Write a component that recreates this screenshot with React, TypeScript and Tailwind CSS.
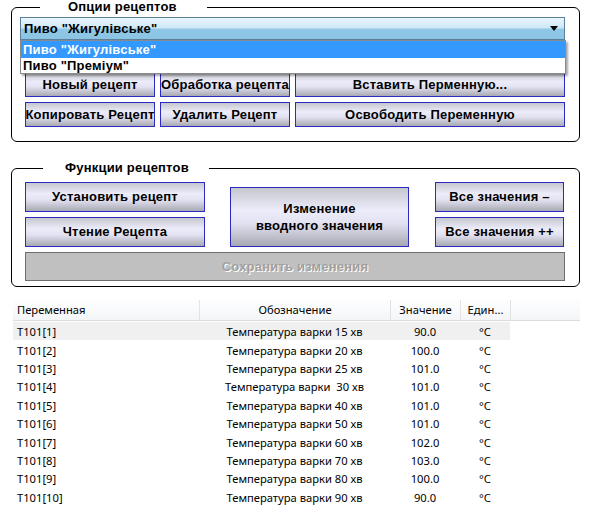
import React from 'react';

type Row = {
    name: string;
    label: string;
    value: string;
    unit: string;
}

const rows: Row[] = [
    { name: 'T101[1]', label: 'Температура варки 15 хв', value: '90.0', unit: '°C' },
    { name: 'T101[2]', label: 'Температура варки 20 хв', value: '100.0', unit: '°C' },
    { name: 'T101[3]', label: 'Температура варки 25 хв', value: '101.0', unit: '°C' },
    { name: 'T101[4]', label: 'Температура варки  30 хв', value: '101.0', unit: '°C' },
    { name: 'T101[5]', label: 'Температура варки 40 хв', value: '101.0', unit: '°C' },
    { name: 'T101[6]', label: 'Температура варки 50 хв', value: '101.0', unit: '°C' },
    { name: 'T101[7]', label: 'Температура варки 60 хв', value: '102.0', unit: '°C' },
    { name: 'T101[8]', label: 'Температура варки 70 хв', value: '103.0', unit: '°C' },
    { name: 'T101[9]', label: 'Температура варки 80 хв', value: '100.0', unit: '°C' },
    { name: 'T101[10]', label: 'Температура варки 90 хв', value: '90.0', unit: '°C' },
];

const btn = 'flex items-center justify-center overflow-hidden whitespace-nowrap border border-[#2b2bc4] bg-[linear-gradient(to_bottom,#c6c6ce_0%,#ececfa_38%,#e2e2f2_60%,#a9a9b3_100%)] text-[13px] font-bold tracking-[0.2px] text-black';

function Btn({ children, className }: { children: React.ReactNode; className: string }) {
    return <div className={`${btn} ${className}`}>{children}</div>;
}

export default function App() {
    return (
        <div className="relative h-[517px] w-[592px] overflow-hidden bg-white font-['Liberation_Sans',sans-serif]">
            {/* Опции рецептов */}
            <fieldset className="relative ml-[11px] w-[569px] rounded-[6px] border border-black px-0 pb-[14px] pt-[3px]">
                <legend className="ml-[28px] pl-[28px] pr-[30px] text-[13px] font-bold leading-[14px] tracking-[0.2px]">Опции рецептов</legend>
                <div className="ml-[8px] flex h-[23px] w-[545px] items-center justify-between border border-[#5c7f9c] bg-[linear-gradient(to_bottom,#eaf5fc_0%,#cfe8f7_45%,#8fc7e6_55%,#8cc4e4_100%)] pl-[3px] pr-[6px] text-[13px] font-bold tracking-[0.2px]">
                    <span>Пиво "Жигулівське"</span>
                    <svg width="8" height="5" viewBox="0 0 8 5"><path d="M0 0h8L4 5z" fill="#000" /></svg>
                </div>
                <div className="absolute left-[8px] top-[26px] z-10 w-[546px] border border-[#8a8a8a] bg-white text-[13px] font-bold tracking-[0.2px] shadow-[2px_2px_2px_rgba(0,0,0,0.35)]">
                    <div className="h-[17px] bg-[#3399ff] pl-[2px] leading-[17px] text-white">Пиво "Жигулівське"</div>
                    <div className="h-[15px] pl-[2px] leading-[15px]">Пиво "Преміум"</div>
                </div>
                <div className="ml-[13px] mt-[32px] grid w-[540px] grid-cols-[130px_130px_270px] gap-[5px]">
                    <Btn className="h-[25px]">Новый рецепт</Btn>
                    <Btn className="h-[25px]">Обработка рецепта</Btn>
                    <Btn className="h-[25px]">Вставить Перменную...</Btn>
                    <Btn className="h-[25px]">Копировать Рецепт</Btn>
                    <Btn className="h-[25px]">Удалить Рецепт</Btn>
                    <Btn className="h-[25px]">Освободить Переменную</Btn>
                </div>
            </fieldset>

            {/* Функции рецептов */}
            <fieldset className="ml-[11px] mt-[19px] w-[569px] rounded-[6px] border border-black px-0 pb-[5px] pt-[7px]">
                <legend className="ml-[31px] pl-[22px] pr-[20px] text-[13px] font-bold leading-[14px] tracking-[0.2px]">Функции рецептов</legend>
                <div className="ml-[13px] flex">
                    <div className="flex w-[180px] flex-col gap-[5px]">
                        <Btn className="h-[30px]">Установить рецепт</Btn>
                        <Btn className="h-[30px]">Чтение Рецепта</Btn>
                    </div>
                    <Btn className="ml-[25px] mt-[5px] h-[60px] w-[179px] flex-col leading-[17px]">
                        <span>Изменение</span>
                        <span>вводного значения</span>
                    </Btn>
                    <div className="ml-[26px] flex w-[129px] flex-col gap-[5px]">
                        <Btn className="h-[30px]">Все значения –</Btn>
                        <Btn className="h-[30px]">Все значения ++</Btn>
                    </div>
                </div>
                <div className="ml-[13px] mt-[5px] flex h-[29px] w-[540px] items-center justify-center border border-[#6e6e6e] bg-[#c0c0c0] text-[13px] font-bold tracking-[0.2px] text-[#a0a0a0] [text-shadow:1px_1px_0_#ffffff]">
                    Сохранить изменения
                </div>
            </fieldset>

            {/* Таблица переменных */}
            <div className="ml-[13px] mt-[11px] w-[567px] font-['Noto_Sans',sans-serif] text-[11.2px] text-black">
                <div className="flex h-[23px] items-center border-b border-[#dcdcdc] bg-[linear-gradient(to_bottom,#ffffff,#f4f5f7)] pt-[2px]">
                    <div className="w-[186px] pl-[4px]">Переменная</div>
                    <div className="h-full w-px bg-[#e3e3e3]" />
                    <div className="w-[190px] text-center">Обозначение</div>
                    <div className="h-full w-px bg-[#e3e3e3]" />
                    <div className="w-[69px] text-center">Значение</div>
                    <div className="h-full w-px bg-[#e3e3e3]" />
                    <div className="w-[49px] text-center">Един...</div>
                    <div className="h-full w-px bg-[#e3e3e3]" />
                </div>
                <div className="pt-px">
                    {rows.map((row, i) => (
                        <div key={i} className={`flex h-[18.4px] w-[497px] items-center pt-[3px] ${i === 0 ? 'bg-[#f0f0f0]' : ''}`}>
                            <div className="w-[186px] pl-[4px]">{row.name}</div>
                            <div className="w-[191px] whitespace-pre text-center">{row.label}</div>
                            <div className="w-[70px] text-center">{row.value}</div>
                            <div className="w-[50px] text-center">{row.unit}</div>
                        </div>
                    ))}
                </div>
            </div>
        </div>
    );
}
